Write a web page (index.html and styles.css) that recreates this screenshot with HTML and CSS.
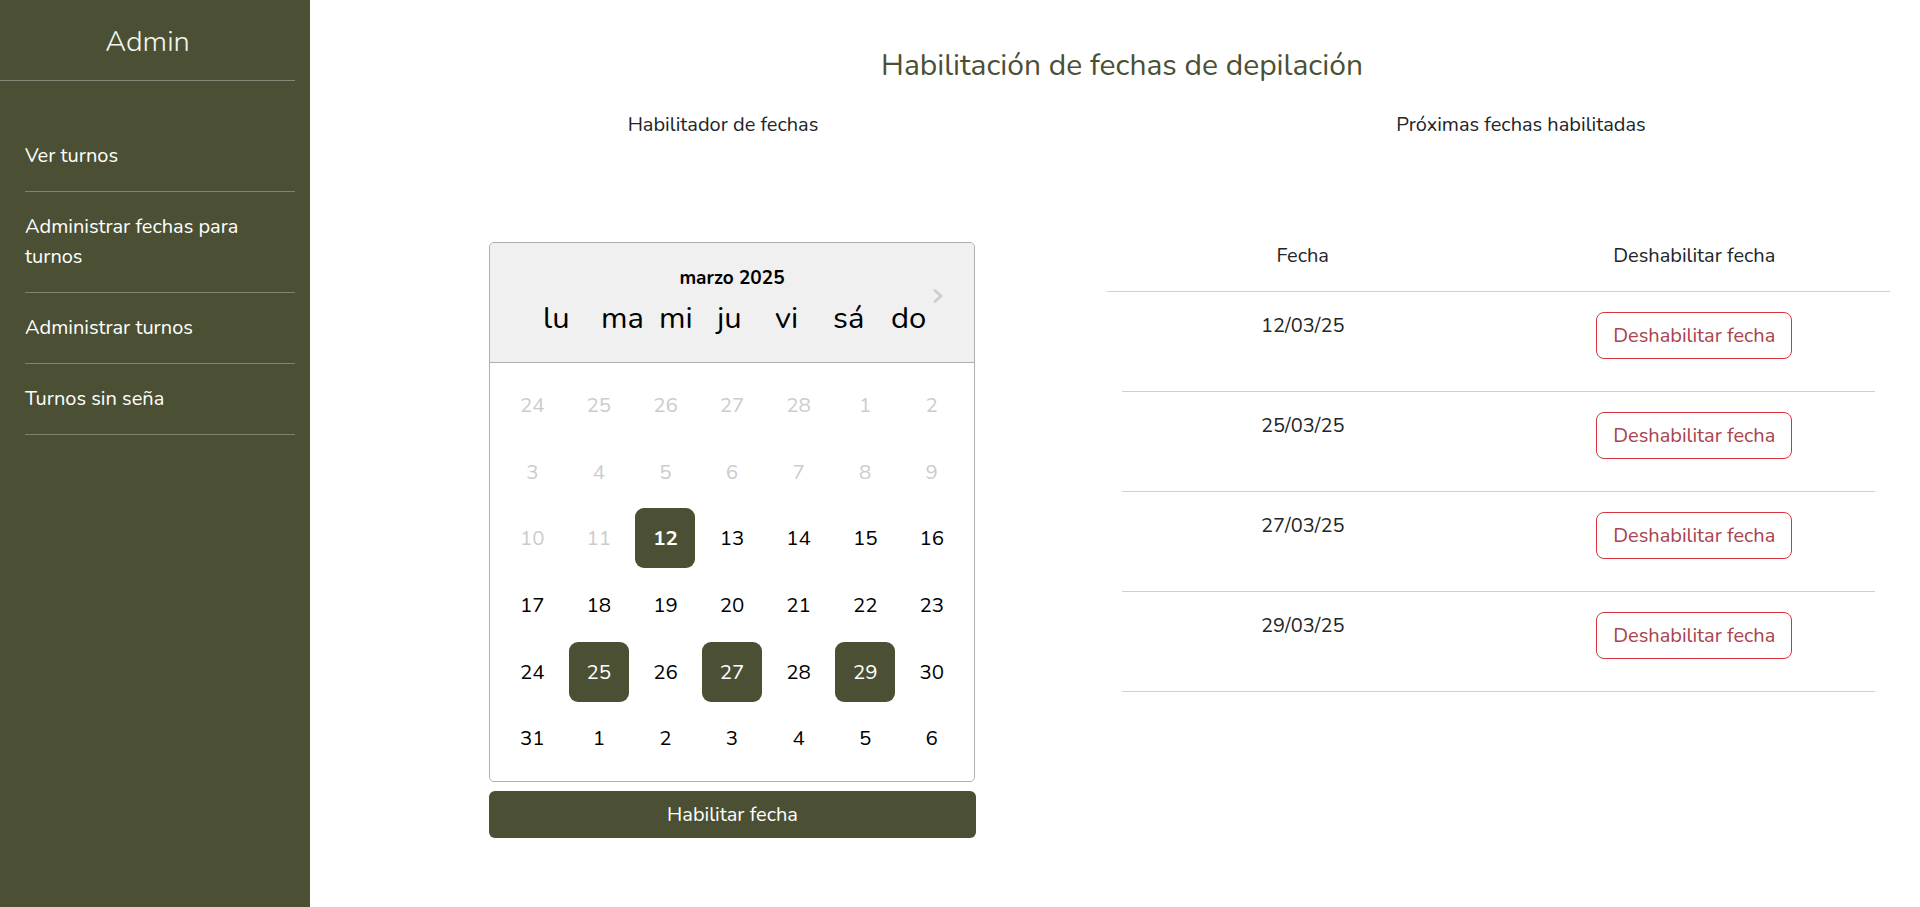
FILE: index.html
```html
<!DOCTYPE html>
<html lang="es">
<head>
<meta charset="utf-8">
<title>Admin</title>
<link rel="stylesheet" href="styles.css">
</head>
<body>
<div class="layout">
  <aside class="sidebar">
    <div class="sidebar-inner">
      <div class="brand">Admin</div>
      <ul class="nav">
        <li><a href="#">Ver turnos</a></li>
        <li><a href="#" class="wrap">Administrar fechas para turnos</a></li>
        <li><a href="#">Administrar turnos</a></li>
        <li><a href="#">Turnos sin seña</a></li>
      </ul>
    </div>
  </aside>
  <main class="main">
    <h1 class="title">Habilitación de fechas de depilación</h1>
    <div class="columns">
      <section class="col col-left">
        <h5 class="subtitle">Habilitador de fechas</h5>
        <div class="cal-wrap">
          <div class="calendar">
            <button class="nav-next" aria-label="Mes siguiente">
              <svg width="10" height="14" viewBox="0 0 10 14"><polyline points="2,1.5 8,7 2,12.5" fill="none" stroke="#cccccc" stroke-width="2.6" stroke-linecap="round" stroke-linejoin="round"/></svg>
            </button>
            <div class="cal-header">
              <div class="cal-month">marzo 2025</div>
              <div class="cal-daynames">
                <span>lu</span><span>ma</span><span>mi</span><span>ju</span><span>vi</span><span>sá</span><span>do</span>
              </div>
            </div>
            <div class="cal-body">
              <div class="week"><span class="day out">24</span><span class="day out">25</span><span class="day out">26</span><span class="day out">27</span><span class="day out">28</span><span class="day out">1</span><span class="day out">2</span></div>
              <div class="week"><span class="day out">3</span><span class="day out">4</span><span class="day out">5</span><span class="day out">6</span><span class="day out">7</span><span class="day out">8</span><span class="day out">9</span></div>
              <div class="week"><span class="day out">10</span><span class="day out">11</span><span class="day sel bold">12</span><span class="day">13</span><span class="day">14</span><span class="day">15</span><span class="day">16</span></div>
              <div class="week"><span class="day">17</span><span class="day">18</span><span class="day">19</span><span class="day">20</span><span class="day">21</span><span class="day">22</span><span class="day">23</span></div>
              <div class="week"><span class="day">24</span><span class="day sel">25</span><span class="day">26</span><span class="day sel">27</span><span class="day">28</span><span class="day sel">29</span><span class="day">30</span></div>
              <div class="week"><span class="day">31</span><span class="day">1</span><span class="day">2</span><span class="day">3</span><span class="day">4</span><span class="day">5</span><span class="day">6</span></div>
            </div>
          </div>
          <button class="btn-primary">Habilitar fecha</button>
        </div>
      </section>
      <section class="col col-right">
        <h5 class="subtitle">Próximas fechas habilitadas</h5>
        <div class="table">
          <div class="thead">
            <div class="th">Fecha</div>
            <div class="th">Deshabilitar fecha</div>
          </div>
          <div class="tr"><div class="tr-inner"><div class="td">12/03/25</div><div class="td"><button class="btn-danger">Deshabilitar fecha</button></div></div></div>
          <div class="tr"><div class="tr-inner"><div class="td">25/03/25</div><div class="td"><button class="btn-danger">Deshabilitar fecha</button></div></div></div>
          <div class="tr"><div class="tr-inner"><div class="td">27/03/25</div><div class="td"><button class="btn-danger">Deshabilitar fecha</button></div></div></div>
          <div class="tr"><div class="tr-inner"><div class="td">29/03/25</div><div class="td"><button class="btn-danger">Deshabilitar fecha</button></div></div></div>
        </div>
      </section>
    </div>
  </main>
</div>
</body>
</html>
```

FILE: styles.css
```css
* { box-sizing: border-box; }
html, body { margin: 0; padding: 0; }
body {
  font-family: "Nunito", "Lato", "Open Sans", sans-serif;
  color: #212529;
  background: #ffffff;
}
.layout {
  display: flex;
  min-height: 907px;
}
.sidebar {
  width: 310px;
  flex: 0 0 310px;
  background: #4b5034;
  color: #ffffff;
}
.sidebar-inner {
  width: 295px;
}
.brand {
  text-align: center;
  font-size: 29px;
  font-weight: 300;
  line-height: 34px;
  padding: 25px 0 21px;
  color: #f4f4ec;
  border-bottom: 1px solid rgba(255,255,255,0.32);
}
.nav {
  list-style: none;
  margin: 40px 0 0;
  padding: 0 0 0 25px;
}
.nav li {
  padding: 20px 0;
  border-bottom: 1px solid rgba(255,255,255,0.3);
}
.nav a {
  display: block;
  color: #ffffff;
  text-decoration: none;
  font-size: 20px;
  line-height: 30px;
}
.nav a.wrap { max-width: 240px; }

.main {
  flex: 1;
  padding: 47px 0 0 14px;
}
.title {
  margin: 0;
  text-align: center;
  font-size: 30px;
  line-height: 38px;
  font-weight: 400;
  color: #4b5034;
}
.columns {
  display: grid;
  grid-template-columns: 1fr 1fr;
  margin-top: 28px;
}
.col {
  display: flex;
  flex-direction: column;
  align-items: center;
}
.subtitle {
  margin: 0;
  font-size: 20px;
  line-height: 24px;
  font-weight: 400;
  color: #212529;
  text-align: center;
}
.cal-wrap {
  margin-top: 105px;
  padding-left: 19px;
}
.calendar {
  position: relative;
  width: 486px;
  border: 1px solid #aeaeae;
  border-radius: 5px;
  background: #fff;
}
.nav-next {
  position: absolute;
  left: 442px;
  top: 45px;
  width: 12px;
  height: 16px;
  padding: 0;
  border: 0;
  background: transparent;
  display: flex;
  align-items: center;
  justify-content: center;
}
.cal-header {
  background: #f0f0f0;
  border-bottom: 1px solid #aeaeae;
  border-radius: 5px 5px 0 0;
  padding: 24px 0 26px;
}
.cal-month {
  text-align: center;
  font-weight: 700;
  font-size: 19px;
  line-height: 22px;
  color: #000;
}
.cal-daynames {
  display: flex;
  margin-top: 11px;
  padding-left: 53px;
  font-size: 31px;
  line-height: 36px;
  color: #000;
}
.cal-daynames span {
  width: 58px;
  white-space: nowrap;
}
.cal-body {
  padding: 9px 9px;
}
.week {
  display: flex;
}
.day {
  width: 60px;
  height: 60px;
  margin: 3.3px;
  line-height: 60px;
  text-align: center;
  font-size: 20.5px;
  color: #000;
  border-radius: 9px;
}
.day.out { color: #cccccc; }
.day.sel { background: #4b5034; color: #fff; }
.day.bold { font-weight: 700; }
.btn-primary {
  display: block;
  width: 487px;
  height: 47px;
  margin-top: 9px;
  border: 0;
  border-radius: 6px;
  background: #4b5034;
  color: #fff;
  font-family: inherit;
  font-size: 20px;
}
.table {
  width: 783px;
  margin-top: 83px;
  align-self: flex-start;
  margin-left: -15px;
}
.thead {
  display: grid;
  grid-template-columns: 1fr 1fr;
  border-bottom: 1px solid #cfcfcf;
}
.th {
  text-align: center;
  font-size: 20px;
  line-height: 27px;
  padding: 22px 0;
}
.tr {
  margin: 0 15px;
  border-bottom: 1px solid #cfcfcf;
}
.tr-inner {
  display: grid;
  grid-template-columns: 1fr 1fr;
  margin: 0 -15px;
}
.td {
  text-align: center;
  font-size: 20px;
  line-height: 27px;
  padding: 20px 0 32px;
}
.btn-danger {
  height: 47px;
  padding: 0 16px;
  border: 1px solid #d9343d;
  border-radius: 8px;
  background: #fff;
  color: #a9434c;
  font-family: inherit;
  font-size: 20px;
  line-height: 27px;
  vertical-align: top;
}
```
